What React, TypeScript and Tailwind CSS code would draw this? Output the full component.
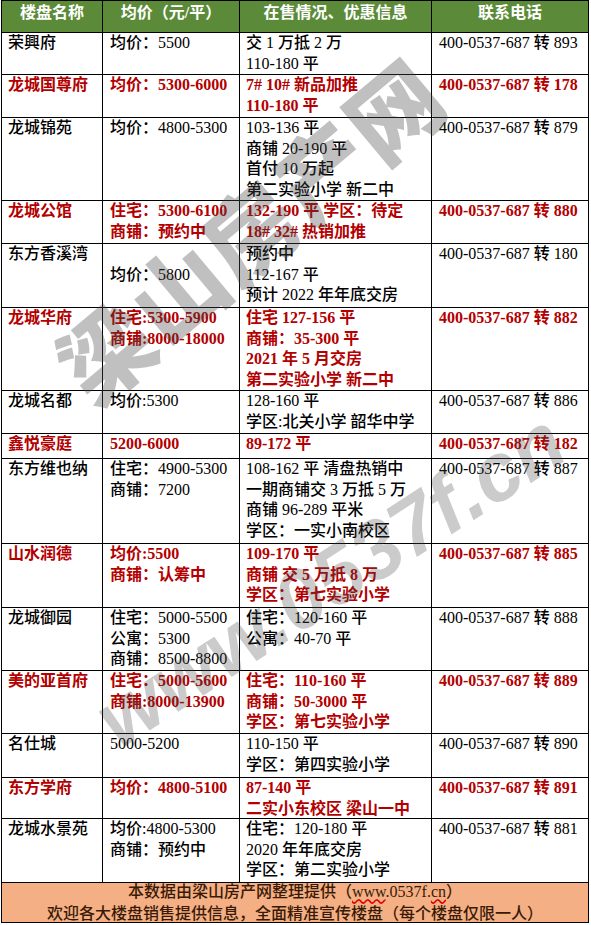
import React from "react";

type Row = {
  name: string;
  red: boolean;
  price: string[];
  info: string[];
  phone: string;
};

const rows: Row[] = [
  { name: "荣興府", red: false, price: ["均价：5500"], info: ["交 1 万抵 2 万", "110-180 平"], phone: "400-0537-687 转 893" },
  { name: "龙城国尊府", red: true, price: ["均价：5300-6000"], info: ["7# 10# 新品加推", "110-180 平"], phone: "400-0537-687 转 178" },
  { name: "龙城锦苑", red: false, price: ["均价：4800-5300"], info: ["103-136 平", "商铺 20-190 平", "首付 10 万起", "第二实验小学 新二中"], phone: "400-0537-687 转 879" },
  { name: "龙城公馆", red: true, price: ["住宅：5300-6100", "商铺：预约中"], info: ["132-190 平 学区：待定", "18# 32# 热销加推"], phone: "400-0537-687 转 880" },
  { name: "东方香溪湾", red: false, price: ["", "均价：5800"], info: ["预约中", "112-167 平", "预计 2022 年年底交房"], phone: "400-0537-687 转 180" },
  { name: "龙城华府", red: true, price: ["住宅:5300-5900", "商铺:8000-18000"], info: ["住宅 127-156 平", "商铺：35-300 平", "2021 年 5 月交房", "第二实验小学 新二中"], phone: "400-0537-687 转 882" },
  { name: "龙城名都", red: false, price: ["均价:5300"], info: ["128-160 平", "学区:北关小学 韶华中学"], phone: "400-0537-687 转 886" },
  { name: "鑫悦豪庭", red: true, price: ["5200-6000"], info: ["89-172 平"], phone: "400-0537-687 转 182" },
  { name: "东方维也纳", red: false, price: ["住宅：4900-5300", "商铺：7200"], info: ["108-162 平 清盘热销中", "一期商铺交 3 万抵 5 万", "商铺 96-289 平米", "学区：一实小南校区"], phone: "400-0537-687 转 887" },
  { name: "山水润德", red: true, price: ["均价:5500", "商铺：认筹中"], info: ["109-170 平", "商铺 交 5 万抵 8 万", "学区：第七实验小学"], phone: "400-0537-687 转 885" },
  { name: "龙城御园", red: false, price: ["住宅：5000-5500", "公寓：5300", "商铺：8500-8800"], info: ["住宅：120-160 平", "公寓：40-70 平"], phone: "400-0537-687 转 888" },
  { name: "美的亚首府", red: true, price: ["住宅：5000-5600", "商铺:8000-13900"], info: ["住宅：110-160 平", "商铺：50-3000 平", "学区：第七实验小学"], phone: "400-0537-687 转 889" },
  { name: "名仕城", red: false, price: ["5000-5200"], info: ["110-150 平", "学区：第四实验小学"], phone: "400-0537-687 转 890" },
  { name: "东方学府", red: true, price: ["均价：4800-5100"], info: ["87-140 平", "二实小东校区 梁山一中"], phone: "400-0537-687 转 891" },
  { name: "龙城水景苑", red: false, price: ["均价:4800-5300", "商铺：预约中"], info: ["住宅：120-180 平", "2020 年年底交房", "学区：第二实验小学"], phone: "400-0537-687 转 881" },
];

function Lines({ lines }: { lines: string[] }) {
  return (
    <>
      {lines.map((l, i) => (
        <div key={i} className="whitespace-nowrap h-[20.7px]">
          {l}
        </div>
      ))}
    </>
  );
}

export default function App() {
  return (
    <div
      className="relative w-[591px] h-[925px] bg-white overflow-hidden text-[16px] leading-[20.7px]"
      style={{ fontFamily: '"Liberation Serif", "Noto Sans CJK SC", serif' }}
    >
      <div className="ml-px w-[588px] grid grid-cols-[100px_136px_191px_156px] grid-rows-[31px_41px_42px_82px_42px_63px_82px_42px_24px_84px_63px_62px_62px_43px_40px_63px_39px] gap-px p-px bg-black">
        {["楼盘名称", "均价（元/平）", "在售情况、优惠信息", "联系电话"].map((h) => (
          <div key={h} className="bg-[#5b8b38] text-white font-bold text-center pt-[2px] leading-[20px] whitespace-nowrap">
            {h}
          </div>
        ))}
        {rows.map((r) => {
          const c = r.red ? "text-[#b30000] font-semibold" : "text-black font-medium";
          return (
            <React.Fragment key={r.name}>
              <div className={`bg-white pl-[6px] ${c}`}>
                <Lines lines={[r.name]} />
              </div>
              <div className={`bg-white pl-[7px] ${c}`}>
                <Lines lines={r.price} />
              </div>
              <div className={`bg-white pl-[6px] ${c}`}>
                <Lines lines={r.info} />
              </div>
              <div className={`bg-white pl-[7px] ${c}`}>
                <Lines lines={[r.phone]} />
              </div>
            </React.Fragment>
          );
        })}
        <div className="col-span-4 bg-[#f4b084] text-[#3a1a06] font-medium flex flex-col items-center justify-center leading-[22px]">
          <div className="whitespace-nowrap">
            本数据由梁山房产网整理提供（
            <span className="underline decoration-wavy decoration-[#e00000] underline-offset-2">www</span>
            .0537f.
            <span className="underline decoration-wavy decoration-[#e00000] underline-offset-2">cn</span>）
          </div>
          <div className="whitespace-nowrap">欢迎各大楼盘销售提供信息，全面精准宣传楼盘（每个楼盘仅限一人）</div>
        </div>
      </div>

      {/* watermarks */}
      <div
        className="pointer-events-none absolute left-[248px] top-[228px] -translate-x-1/2 -translate-y-1/2 -rotate-[40deg] whitespace-nowrap text-[92px] leading-none font-black tracking-[2px] text-[rgba(70,70,70,0.34)]"
        style={{ fontFamily: '"Noto Sans CJK SC", sans-serif' }}
      >
        梁山房产网
      </div>
      <div
        className="pointer-events-none absolute left-[330px] top-[580px] -translate-x-1/2 -translate-y-1/2 -rotate-[33deg] whitespace-nowrap text-[82px] leading-none font-bold italic text-[rgba(70,70,70,0.28)]"
        style={{ fontFamily: '"Liberation Sans", sans-serif' }}
      >
        www.0537f.cn
      </div>
    </div>
  );
}
